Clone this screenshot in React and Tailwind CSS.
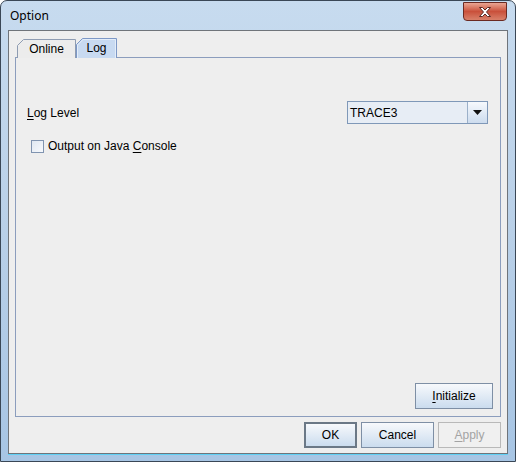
import React from "react";

function Tab({ label, selected, width }) {
  const w = width;
  const h = selected ? 20 : 19;
  return (
    <div
      className={`relative flex items-center justify-center ${selected ? "h-[20px] mt-0" : "h-[19px] mt-[1px]"}`}
      style={{ width: w }}
    >
      <svg className="absolute inset-0" width={w} height={h} viewBox={`0 0 ${w} ${h}`}>
        <path
          d={`M0.5 ${h} L0.5 6.5 L6.5 0.5 L${w - 0.5} 0.5 L${w - 0.5} ${h}`}
          fill={selected ? "#c8daf1" : "#ececec"}
          stroke={selected ? "#7d98c6" : "#8e9cb2"}
          strokeWidth="1"
        />
        {selected && (
          <path d={`M1.5 ${h} L1.5 7 L7 1.5 L${w - 1.5} 1.5 L${w - 1.5} ${h}`} fill="none" stroke="#e3edf9" strokeWidth="1" />
        )}
      </svg>
      <span className="relative text-[12px] text-black leading-none">{label}</span>
    </div>
  );
}

function Button({ children, w, isDefault, disabled }) {
  let cls = "";
  if (disabled) cls = "border border-[#b9b9b9] bg-[#f0f0f0] text-[#a3a3a3]";
  else if (isDefault)
    cls = "border-2 border-[#6b7886] bg-gradient-to-b from-[#f7f9fc] to-[#cbdcee] text-black";
  else cls = "border border-[#7e8fa5] bg-gradient-to-b from-[#f7f9fc] to-[#cbdcee] text-black";
  return (
    <div className={`flex h-[26px] items-center justify-center text-[12px] ${cls}`} style={{ width: w }}>
      {children}
    </div>
  );
}

export default function App() {
  return (
    <div
      className="flex h-[462px] w-[516px] flex-col overflow-hidden rounded-t-[7px] border border-[#3a4756] bg-gradient-to-b from-[#c7dbef] via-[#b9d0e8] to-[#a7c5e4]"
      style={{ fontFamily: '"Liberation Sans", Arial, sans-serif' }}
    >
      {/* title bar */}
      <div className="flex h-[29px] shrink-0 items-start justify-between">
        <div
          className="pl-[9px] pt-[7px] text-[12px] leading-[16px] text-black"
          style={{ fontFamily: '"Noto Sans", "Open Sans", sans-serif' }}
        >
          Option
        </div>
        <div className="mr-[8px] mt-[1px] flex h-[19px] w-[44px] items-center justify-center rounded-b-[4px] border border-[#6b2a22] bg-gradient-to-b from-[#e9a593] via-[#c9503b] to-[#d8806a]">
          <svg width="14" height="12" viewBox="0 0 14 12">
            <path
              d="M1.5 1.5 L4.5 1.5 L7 4 L9.5 1.5 L12.5 1.5 L8.5 6 L12.5 10.5 L9.5 10.5 L7 8 L4.5 10.5 L1.5 10.5 L5.5 6 Z"
              fill="#ffffff"
              stroke="#5a2a25"
              strokeWidth="1"
              strokeLinejoin="round"
            />
          </svg>
        </div>
      </div>

      {/* content */}
      <div className="mx-[7px] mb-[7px] flex flex-1 flex-col border border-[#6f747a] bg-[#eeeeee] px-[6px] pb-[5px] pt-[7px] shadow-[0_1px_0_#5fd0f5]">
        {/* tabs */}
        <div className="flex h-[20px] items-end pl-[2px]">
          <Tab label="Online" width={59} />
          <Tab label="Log" width={41} selected />
        </div>
        {/* tab panel */}
        <div className="flex flex-1 flex-col border border-[#8b9dbd] -mt-[1px] px-[11px] pb-[7px]">
          <div className="mt-[43px] flex h-[23px] items-center justify-between">
            <span className="text-[12px] text-black">
              <span className="underline underline-offset-2">L</span>og Level
            </span>
            <div className="mr-[1px] flex h-[23px] w-[141px] border border-[#7f98b8] bg-[#e7edf5]">
              <div className="flex flex-1 items-center pl-[2px] text-[12px] text-black">TRACE3</div>
              <div className="flex w-[20px] items-center justify-center border-l border-[#9bb0c9] bg-gradient-to-b from-[#f6f9fd] to-[#cddcee]">
                <svg width="9" height="5" viewBox="0 0 9 5">
                  <path d="M0 0 H9 L4.5 5 Z" fill="#111" />
                </svg>
              </div>
            </div>
          </div>
          <div className="mt-[13px] flex items-center gap-[4px] pl-[4px]">
            <div className="h-[13px] w-[13px] border border-[#8094b0] bg-gradient-to-br from-[#dfe7f1] to-[#f7f9fc]" />
            <span className="text-[12px] text-black">
              Output on Java <span className="underline underline-offset-2">C</span>onsole
            </span>
          </div>
          <div className="flex-1" />
          <div className="-mr-[4px] flex justify-end">
            <Button w={78}>
              <span>
                <span className="underline underline-offset-2">I</span>nitialize
              </span>
            </Button>
          </div>
        </div>
        {/* buttons */}
        <div className="mt-[5px] flex justify-end gap-[4px]">
          <Button w={53} isDefault>
            OK
          </Button>
          <Button w={73}>Cancel</Button>
          <Button w={63} disabled>
            <span>
              <span className="underline underline-offset-2">A</span>pply
            </span>
          </Button>
        </div>
      </div>
    </div>
  );
}
